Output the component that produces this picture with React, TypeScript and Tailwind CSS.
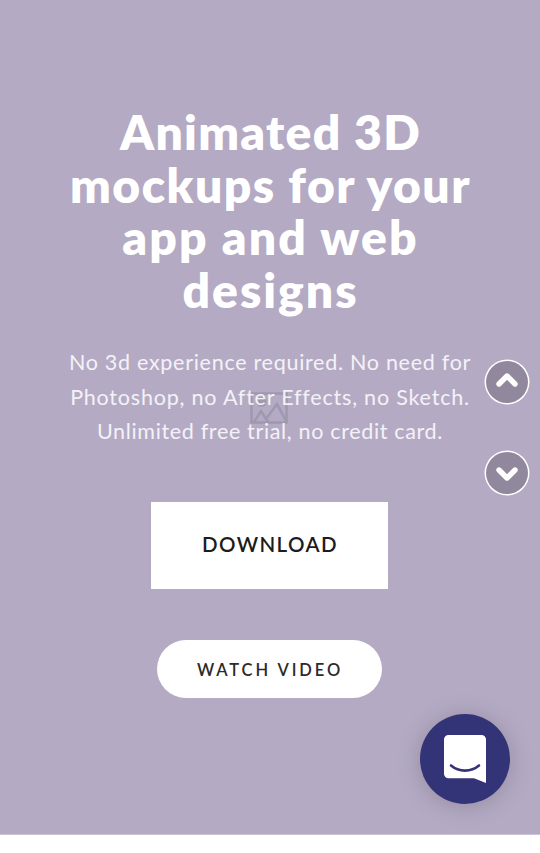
import { ChevronDown, ChevronUp } from 'lucide-react';

const headline = [
  { text: 'Animated 3D', className: 'tracking-[1.3px]' },
  { text: 'mockups for your', className: 'tracking-[1.5px]' },
  { text: 'app and web', className: 'tracking-[2.1px]' },
  { text: 'designs', className: 'tracking-[2px]' },
];

const intro = [
  { text: 'No 3d experience required. No need for', className: 'tracking-[0.72px]' },
  { text: 'Photoshop, no After Effects, no Sketch.', className: 'tracking-[0.8px]' },
  { text: 'Unlimited free trial, no credit card.', className: 'tracking-[0.66px]' },
];

function ImagePlaceholder() {
  return (
    <svg
      className="absolute left-[250px] top-[392px] h-8 w-[38px]"
      viewBox="0 0 38 32"
      fill="none"
      stroke="#9f98af"
      strokeWidth="2.5"
    >
      <rect x="1.5" y="1.5" width="35" height="29" />
      <circle cx="11.5" cy="10" r="5" fill="#9f98af" stroke="none" />
      <path d="M4 30l7-11 7 11M16 27l11-15 9 17" />
    </svg>
  );
}

function SlideControls() {
  const button =
    'flex h-[42px] w-[42px] items-center justify-center rounded-full bg-[#91889e] text-white ring-[1.5px] ring-white';

  return (
    <div className="absolute left-[486px] top-[361px] flex flex-col gap-[49px]">
      <button className={button} aria-label="Previous">
        <ChevronUp className="h-8 w-8 shrink-0 -translate-y-0.5" strokeWidth={4} />
      </button>
      <button className={button} aria-label="Next">
        <ChevronDown className="h-8 w-8 shrink-0 translate-y-px" strokeWidth={4} />
      </button>
    </div>
  );
}

function ChatLauncher() {
  return (
    <button
      aria-label="Open chat"
      className="absolute left-[420px] top-[714px] flex h-[90px] w-[90px] items-center justify-center rounded-full bg-[#333377] shadow-[0_2px_24px_rgba(0,0,0,0.18)]"
    >
      <svg className="h-12 w-[42px]" viewBox="0 0 42 48" fill="none">
        <path
          d="M4.5 0h33A4.5 4.5 0 0 1 42 4.5V48l-12-4.8H4.5A4.5 4.5 0 0 1 0 38.7V4.5A4.5 4.5 0 0 1 4.5 0z"
          fill="white"
        />
        <path d="M7 30.5c8 6.8 20 6.8 28 0" stroke="#333377" strokeWidth="2.6" strokeLinecap="round" />
      </svg>
    </button>
  );
}

export default function App() {
  return (
    <div className="relative h-[853px] w-[540px] overflow-hidden bg-white font-['Lato',sans-serif]">
      <main className="flex h-[835px] flex-col items-center border-b border-[#cac4d5] bg-[#b4aac4] pt-[106px]">
        <ImagePlaceholder />
        <h1 className="relative text-center text-[48px] leading-[52.5px] font-extrabold whitespace-nowrap text-white">
          {headline.map((line) => (
            <span key={line.text} className={`block pl-px ${line.className}`}>
              {line.text}
            </span>
          ))}
        </h1>
        <p className="relative mt-[29px] text-center text-[21.5px] leading-[34.5px] whitespace-nowrap text-white/85">
          {intro.map((line) => (
            <span key={line.text} className={`block ${line.className}`}>
              {line.text}
            </span>
          ))}
        </p>
        <button className="mt-[53px] mr-px h-[87px] w-[237px] bg-white pb-0.5 pl-px text-[20.5px] font-semibold tracking-[1.4px] text-[#1c1c1c]">
          DOWNLOAD
        </button>
        <button className="mt-[51px] mr-px h-[58px] w-[225px] rounded-[29px] bg-white pt-[3px] pl-px text-[16.5px] font-semibold tracking-[2.9px] text-[#2b2b2b]">
          WATCH VIDEO
        </button>
      </main>
      <SlideControls />
      <ChatLauncher />
    </div>
  );
}
